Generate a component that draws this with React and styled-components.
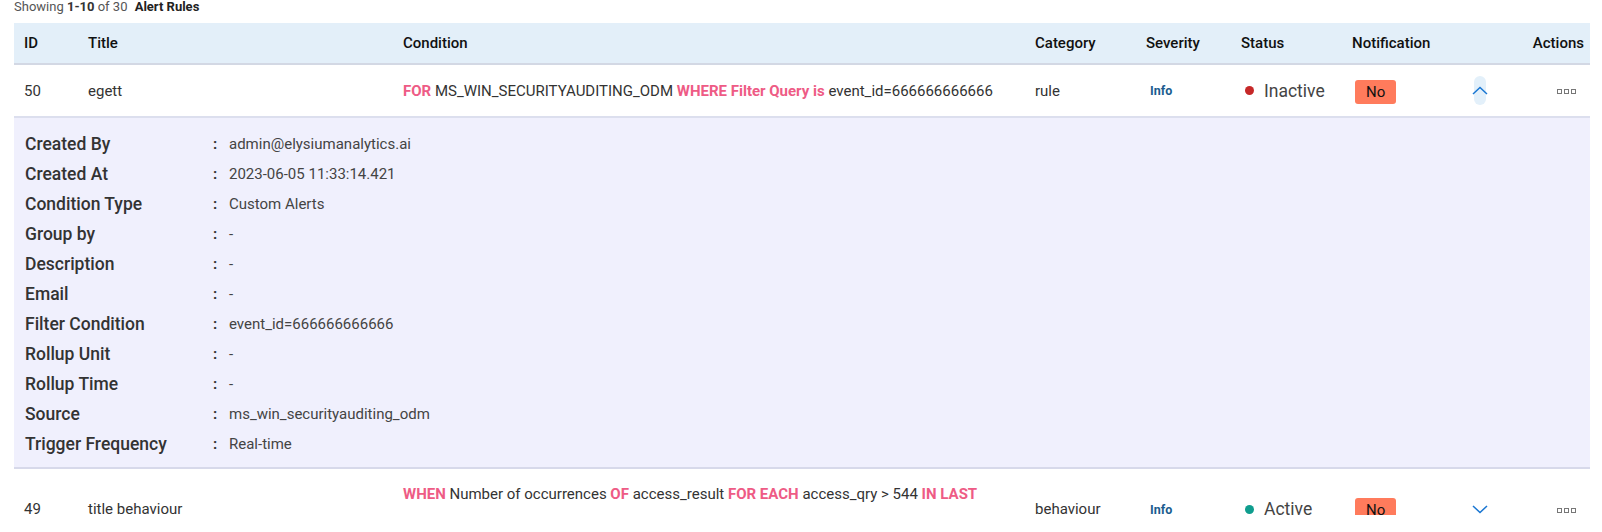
import styled, { createGlobalStyle } from "styled-components";

const GlobalStyle = createGlobalStyle`
  body {
    margin: 0;
    background: #ffffff;
    font-family: Roboto, "Liberation Sans", Arial, sans-serif;
    color: #333333;
  }
`;

const rules = [
  {
    id: 50,
    title: "egett",
    condition: [
      { kw: "FOR" },
      { t: "MS_WIN_SECURITYAUDITING_ODM" },
      { kw: "WHERE Filter Query is" },
      { t: "event_id=666666666666" },
    ],
    category: "rule",
    severity: "Info",
    active: false,
    notification: "No",
    open: true,
  },
  {
    id: 49,
    title: "title behaviour",
    condition: [
      { kw: "WHEN" },
      { t: "Number of occurrences" },
      { kw: "OF" },
      { t: "access_result" },
      { kw: "FOR EACH" },
      { t: "access_qry > 544" },
      { kw: "IN LAST" },
      { t: "10 minutes", keep: true },
    ],
    category: "behaviour",
    severity: "Info",
    active: true,
    notification: "No",
    open: false,
  },
];

const details = [
  ["Created By", "admin@elysiumanalytics.ai"],
  ["Created At", "2023-06-05 11:33:14.421"],
  ["Condition Type", "Custom Alerts"],
  ["Group by", "-"],
  ["Description", "-"],
  ["Email", "-"],
  ["Filter Condition", "event_id=666666666666"],
  ["Rollup Unit", "-"],
  ["Rollup Time", "-"],
  ["Source", "ms_win_securityauditing_odm"],
  ["Trigger Frequency", "Real-time"],
];

const columns = [
  { label: "ID", width: 64 },
  { label: "Title", width: 315 },
  { label: "Condition", width: 632 },
  { label: "Category", width: 111 },
  { label: "Severity", width: 95 },
  { label: "Status", width: 111 },
  { label: "Notification", width: 108 },
  { label: "", width: 60 },
  { label: "Actions", width: 80, right: true },
];

function Chevron({ up }) {
  return (
    <svg width="16" height="9" viewBox="0 0 16 9">
      <polyline
        points={up ? "1,8 8,1.5 15,8" : "1,1 8,7.5 15,1"}
        fill="none"
        stroke="#1976d2"
        strokeWidth="1.5"
      />
    </svg>
  );
}

function Condition({ parts }) {
  return parts.map((p, i) =>
    p.kw ? (
      <Keyword key={i}>{p.kw} </Keyword>
    ) : (
      <Plain key={i} $keep={p.keep}>
        {p.t}{" "}
      </Plain>
    )
  );
}

export default function App() {
  return (
    <Page>
      <GlobalStyle />
      <Summary>
        Showing <b>1-10</b> of 30 <Strong>Alert Rules</Strong>
      </Summary>
      <TableWrap>
        <Table>
          <colgroup>
            {columns.map((c, i) => (
              <col key={i} style={{ width: c.width }} />
            ))}
          </colgroup>
          <thead>
            <tr>
              {columns.map((c, i) => (
                <Th key={i} $right={c.right}>
                  {c.label}
                </Th>
              ))}
            </tr>
          </thead>
          <tbody>
            {rules.map((r) => (
              <>
                <tr key={r.id}>
                  <Td>{r.id}</Td>
                  <Td>{r.title}</Td>
                  <Td>
                    <Condition parts={r.condition} />
                  </Td>
                  <Td>{r.category}</Td>
                  <Td>
                    <Severity>{r.severity}</Severity>
                  </Td>
                  <Td>
                    <Status>
                      <Dot $active={r.active} />
                      {r.active ? "Active" : "Inactive"}
                    </Status>
                  </Td>
                  <Td>
                    <Badge>{r.notification}</Badge>
                  </Td>
                  <Td>
                    <ExpandButton $open={r.open}>
                      <Chevron up={r.open} />
                    </ExpandButton>
                  </Td>
                  <Td $right>
                    <MoreIcon>
                      <span />
                      <span />
                      <span />
                    </MoreIcon>
                  </Td>
                </tr>
                {r.open && (
                  <tr key={r.id + "-details"}>
                    <DetailCell colSpan={columns.length}>
                      <DetailGrid>
                        {details.map(([k, v]) => (
                          <>
                            <DetailLabel key={k}>{k}</DetailLabel>
                            <Colon>:</Colon>
                            <DetailValue>{v}</DetailValue>
                          </>
                        ))}
                      </DetailGrid>
                    </DetailCell>
                  </tr>
                )}
              </>
            ))}
          </tbody>
        </Table>
      </TableWrap>
    </Page>
  );
}

const Page = styled.div`
  padding: 0 12px 0 14px;
`;

const Summary = styled.div`
  font-size: 13px;
  line-height: 14px;
  color: #555555;
  margin-bottom: 9px;
  b {
    color: #333333;
    font-weight: 700;
  }
`;

const Strong = styled.span`
  margin-left: 4px;
  font-weight: 700;
  color: #222222;
`;

const TableWrap = styled.div`
  height: 492px;
  overflow: hidden;
`;

const Table = styled.table`
  width: 100%;
  border-collapse: collapse;
  table-layout: fixed;
`;

const Th = styled.th`
  padding: 5px ${(p) => (p.$right ? "6px" : "10px")} 5px 10px;
  line-height: 30px;
  font-size: 15px;
  font-weight: 500;
  color: #111111;
  text-align: ${(p) => (p.$right ? "right" : "left")};
  background: #e3eff9;
  border-bottom: 2px solid #d3d8e4;
  white-space: nowrap;
`;

const Td = styled.td`
  padding: 10px ${(p) => (p.$right ? "14px" : "10px")} 10px 10px;
  line-height: 30px;
  font-size: 15px;
  color: #333333;
  vertical-align: middle;
  text-align: ${(p) => (p.$right ? "right" : "left")};
  border-bottom: 2px solid #dcdfee;
`;

const Keyword = styled.span`
  font-weight: 700;
  color: #ee5b85;
`;

const Plain = styled.span`
  white-space: ${(p) => (p.$keep ? "nowrap" : "normal")};
`;

const Severity = styled.span`
  padding-left: 4px;
  font-size: 12.5px;
  font-weight: 700;
  color: #1b5c8e;
`;

const Status = styled.span`
  display: inline-flex;
  align-items: center;
  gap: 10px;
  padding-left: 4px;
  font-size: 17.5px;
  color: #444444;
`;

const Dot = styled.span`
  width: 9px;
  height: 9px;
  border-radius: 50%;
  background: ${(p) => (p.$active ? "#0f9d8e" : "#c62828")};
`;

const Badge = styled.span`
  display: inline-block;
  margin-left: 3px;
  padding: 0 11px;
  line-height: 24px;
  border-radius: 3px;
  background: #ff7b5c;
  color: #111111;
  font-size: 15px;
  vertical-align: middle;
`;

const ExpandButton = styled.span`
  position: relative;
  display: flex;
  justify-content: center;
  align-items: center;
  height: 30px;
  &::before {
    content: "";
    position: absolute;
    left: 50%;
    top: 0;
    width: 12px;
    height: 29px;
    margin-left: -6px;
    border-radius: 6px;
    background: ${(p) => (p.$open ? "#e3f0fa" : "transparent")};
  }
  svg {
    position: relative;
  }
`;

const MoreIcon = styled.span`
  display: inline-flex;
  gap: 2px;
  vertical-align: middle;
  span {
    width: 5px;
    height: 5px;
    box-sizing: border-box;
    border: 1px solid #777777;
  }
`;

const DetailCell = styled.td`
  padding: 11px 11px 8px;
  background: #f0f0fd;
  border-bottom: 2px solid #d7d9ea;
`;

const DetailGrid = styled.div`
  display: grid;
  grid-template-columns: 188px 16px 1fr;
  grid-auto-rows: 30px;
  align-items: center;
`;

const DetailLabel = styled.div`
  font-size: 17.5px;
  font-weight: 500;
  color: #333333;
`;

const Colon = styled.div`
  font-size: 15px;
  font-weight: 700;
  color: #333333;
`;

const DetailValue = styled.div`
  font-size: 15px;
  color: #444444;
`;
